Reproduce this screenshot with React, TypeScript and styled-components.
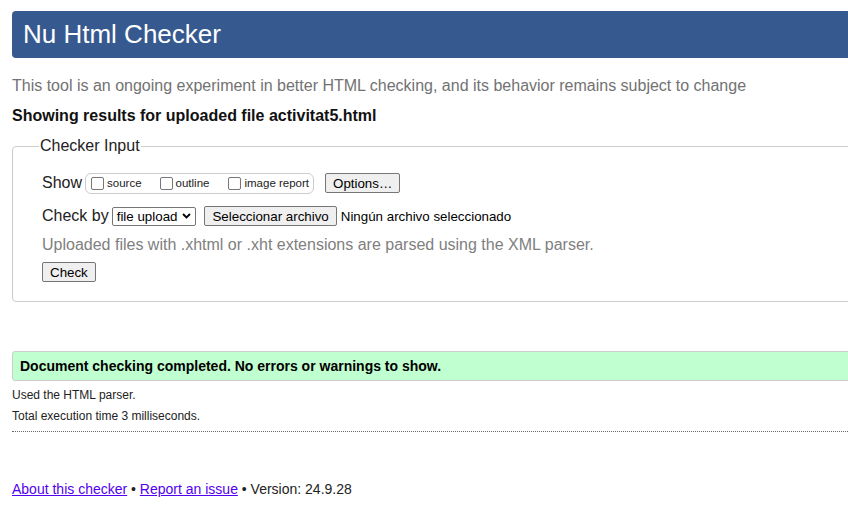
import React from "react";
import styled, { createGlobalStyle } from "styled-components";

const Global = createGlobalStyle`
  html, body { margin: 0; padding: 0; background: #fff; overflow: hidden; }
  body { font-family: "Liberation Sans", Arial, sans-serif; color: #000; }
`;

const Page = styled.div`
  width: 900px;
  padding: 11px 0 0 12px;
`;

const Header = styled.h1`
  margin: 0;
  height: 47px;
  box-sizing: border-box;
  background: #365a8f;
  color: #fff;
  border-radius: 4px 0 0 4px;
  font-size: 26px;
  font-weight: normal;
  line-height: 47px;
  padding-left: 11px;
`;

const Intro = styled.p`
  margin: 18px 0 0 0;
  font-size: 16px;
  line-height: 20px;
  color: #727272;
`;

const Showing = styled.h2`
  margin: 10px 0 0 0;
  font-size: 16px;
  line-height: 20px;
  font-weight: bold;
  color: #111;
`;

const Fieldset = styled.fieldset`
  margin: 11px 0 0 0;
  padding: 16px 0 19px 29px;
  border: 1px solid #ccc;
  border-radius: 4px;
  min-width: 0;
`;

const Legend = styled.legend`
  font-size: 16px;
  padding: 0 1px;
  margin-left: -3px;
  color: #222;
`;

const Row = styled.div`
  display: flex;
  align-items: center;
  height: 24px;
  font-size: 16px;
  color: #222;
  & + & { margin-top: 9px; }
`;

const Label = styled.span`
  font-size: 16px;
  margin-right: 3px;
`;

const Pill = styled.span`
  display: inline-flex;
  align-items: center;
  height: 19px;
  border: 1px solid #ccc;
  border-radius: 6px;
  padding: 0 4px 0 5px;
  margin-right: 11px;
`;

const CheckOpt = styled.label<{ $gap: number }>`
  display: inline-flex;
  align-items: center;
  font-size: 11.5px;
  color: #222;
  margin-right: ${(p) => p.$gap}px;
`;

const Box = styled.span`
  display: inline-block;
  box-sizing: border-box;
  width: 13px;
  height: 13px;
  border: 1px solid #767676;
  border-radius: 2px;
  margin-right: 3px;
  background: #fff;
`;

const Button = styled.span`
  display: inline-flex;
  align-items: center;
  box-sizing: border-box;
  height: 20px;
  padding: 0 7px;
  font-size: 13.33px;
  color: #000;
  background: #efefef;
  border: 1px solid #767676;
  border-radius: 2px;
`;

const Select = styled.span`
  display: inline-flex;
  align-items: center;
  box-sizing: border-box;
  height: 19px;
  padding: 0 4px 0 4px;
  font-size: 13.33px;
  color: #000;
  background: #fff;
  border: 1px solid #767676;
  border-radius: 2px;
  margin-right: 8px;
  gap: 5px;
`;

const FileName = styled.span`
  font-size: 13.33px;
  color: #000;
  margin-left: 4px;
`;

const Hint = styled.p`
  margin: 7px 0 0 0;
  font-size: 16px;
  line-height: 20px;
  color: #808080;
`;

const CheckRow = styled.div`
  margin-top: 7px;
  display: flex;
`;

const Success = styled.div`
  margin-top: 49px;
  height: 30px;
  box-sizing: border-box;
  background: #c0ffd0;
  border: 1px solid #ccc;
  border-radius: 3px 0 0 3px;
  font-size: 14px;
  font-weight: bold;
  line-height: 28px;
  padding-left: 7px;
  color: #000;
`;

const Info = styled.p<{ $mt: number }>`
  margin: ${(p) => p.$mt}px 0 0 0;
  font-size: 12px;
  line-height: 14px;
  color: #222;
`;

const Rule = styled.hr`
  margin: 8px 0 0 0;
  border: 0;
  border-top: 1px dotted #666;
  height: 0;
`;

const Footer = styled.p`
  margin: 49px 0 0 0;
  font-size: 14px;
  line-height: 16px;
  color: #222;
`;

const Link = styled.a`
  color: #5200ee;
  text-decoration: underline;
`;

export default function App() {
  return (
    <>
      <Global />
      <Page>
        <Header>Nu Html Checker</Header>
        <Intro>
          This tool is an ongoing experiment in better HTML checking, and its behavior remains subject to change
        </Intro>
        <Showing>Showing results for uploaded file activitat5.html</Showing>
        <Fieldset>
          <Legend>Checker Input</Legend>
          <Row>
            <Label>Show</Label>
            <Pill>
              <CheckOpt $gap={18}>
                <Box />
                source
              </CheckOpt>
              <CheckOpt $gap={19}>
                <Box />
                outline
              </CheckOpt>
              <CheckOpt $gap={0}>
                <Box />
                image report
              </CheckOpt>
            </Pill>
            <Button>Options…</Button>
          </Row>
          <Row>
            <Label>Check by</Label>
            <Select>
              file upload
              <svg width="9" height="6" viewBox="0 0 9 6">
                <path d="M1 1 L4.5 4.5 L8 1" stroke="#000" strokeWidth="1.8" fill="none" />
              </svg>
            </Select>
            <Button>Seleccionar archivo</Button>
            <FileName>Ningún archivo seleccionado</FileName>
          </Row>
          <Hint>Uploaded files with .xhtml or .xht extensions are parsed using the XML parser.</Hint>
          <CheckRow>
            <Button>Check</Button>
          </CheckRow>
        </Fieldset>
        <Success>Document checking completed. No errors or warnings to show.</Success>
        <Info $mt={7}>Used the HTML parser.</Info>
        <Info $mt={7}>Total execution time 3 milliseconds.</Info>
        <Rule />
        <Footer>
          <Link href="#">About this checker</Link> • <Link href="#">Report an issue</Link> • Version: 24.9.28
        </Footer>
      </Page>
    </>
  );
}
